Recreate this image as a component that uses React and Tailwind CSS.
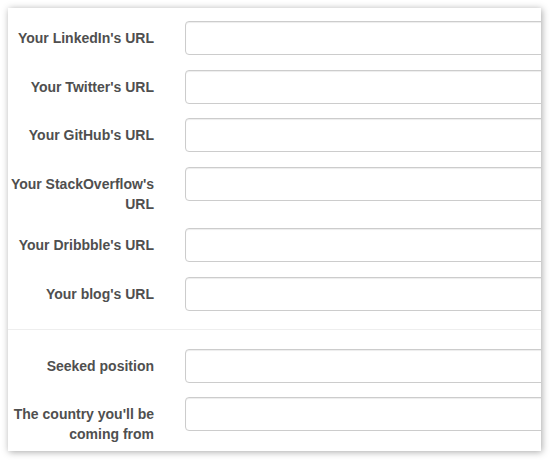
const socialFields = [
  { id: 'linkedin', label: "Your LinkedIn's URL" },
  { id: 'twitter', label: "Your Twitter's URL" },
  { id: 'github', label: "Your GitHub's URL" },
  { id: 'stackoverflow', label: "Your StackOverflow's URL" },
  { id: 'dribbble', label: "Your Dribbble's URL" },
  { id: 'blog', label: "Your blog's URL" },
];

const otherFields = [
  { id: 'position', label: 'Seeked position' },
  { id: 'country', label: "The country you'll be coming from" },
];

function FormRow({ field }) {
  return (
    <div className="flex items-start mb-[14.5px]">
      <label
        htmlFor={field.id}
        className="w-[162px] shrink-0 pr-[16px] pt-[7px] text-right text-[14px] leading-[20px] font-bold text-[#4f4f4f]"
      >
        {field.label}
      </label>
      <div className="pl-[15px] flex-1">
        <input
          id={field.id}
          type="text"
          className="block w-[420px] h-[34px] rounded-[4px] border border-[#cccccc] bg-white px-3 shadow-[inset_0_1px_1px_rgba(0,0,0,0.075)] outline-none"
        />
      </div>
    </div>
  );
}

export default function App() {
  return (
    <div className="w-[550px] h-[460px] bg-white pt-2 pl-2" style={{ fontFamily: '"Liberation Sans", Arial, sans-serif' }}>
      <div className="w-[533px] h-[443px] bg-white overflow-hidden shadow-[1px_1px_7px_rgba(0,0,0,0.35)] pt-[13px]">
        {socialFields.map((f) => (
          <FormRow key={f.id} field={f} />
        ))}
        <hr className="border-0 border-t border-[#eeeeee] mt-[18px] mb-[19px]" />
        {otherFields.map((f) => (
          <FormRow key={f.id} field={f} />
        ))}
      </div>
    </div>
  );
}
